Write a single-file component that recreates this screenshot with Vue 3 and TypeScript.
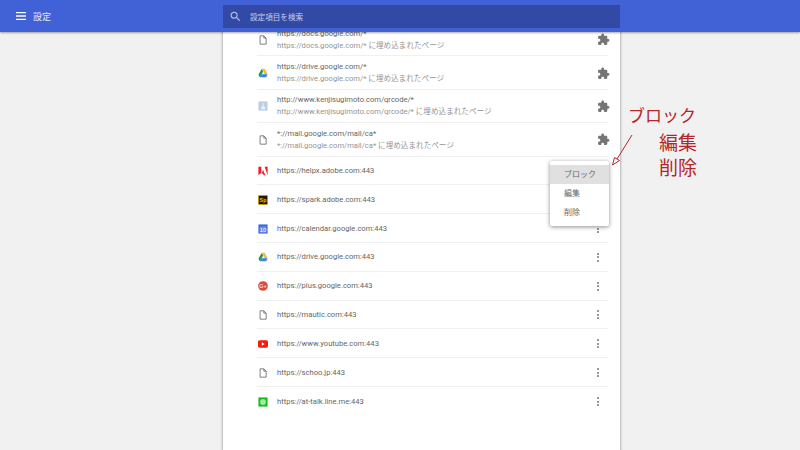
<template>
  <div class="page">
    <header class="topbar">
      <div class="topbar-left">
        <svg class="menu-icon" viewBox="0 0 14 12" width="12" height="10">
          <path d="M1 2h12M1 6h12M1 10h12" stroke="#fff" stroke-width="1.6" fill="none" />
        </svg>
        <span class="title">設定</span>
      </div>
      <div class="search">
        <svg viewBox="0 0 24 24" width="13" height="13">
          <path fill="#b9c4e6" d="M15.5 14h-.79l-.28-.27A6.47 6.47 0 0 0 16 9.5 6.5 6.5 0 1 0 9.5 16c1.61 0 3.09-.59 4.23-1.57l.27.28v.79l5 4.99L20.49 19l-4.99-5zm-6 0C7.01 14 5 11.99 5 9.5S7.01 5 9.5 5 14 7.01 14 9.5 11.99 14 9.5 14z" />
        </svg>
        <span>設定項目を検索</span>
      </div>
    </header>

    <main class="panel">
      <div class="list">
        <div v-for="row in extensionRows" :key="row.url" class="row ext-row">
          <SiteIcon :kind="row.icon" />
          <div class="texts">
            <div class="url">{{ row.url }}</div>
            <div class="sub">{{ row.url }} に埋め込まれたページ</div>
          </div>
          <svg class="puzzle" viewBox="0 0 24 24" width="13" height="13">
            <path fill="#757575" d="M20.5 11H19V7c0-1.1-.9-2-2-2h-4V3.5C13 2.12 11.88 1 10.5 1S8 2.12 8 3.5V5H4c-1.1 0-1.99.9-1.99 2v3.8H3.5c1.49 0 2.7 1.21 2.7 2.7s-1.21 2.7-2.7 2.7H2V20c0 1.1.9 2 2 2h3.8v-1.5c0-1.49 1.21-2.7 2.7-2.7 1.49 0 2.7 1.21 2.7 2.7V22H17c1.1 0 2-.9 2-2v-4h1.5c1.38 0 2.5-1.12 2.5-2.5S21.88 11 20.5 11z" />
          </svg>
        </div>
        <div v-for="row in siteRows" :key="row.url" class="row site-row">
          <SiteIcon :kind="row.icon" />
          <div class="url site-url">{{ row.url }}</div>
          <span class="dots"><i></i><i></i><i></i></span>
        </div>
      </div>
    </main>

    <div class="menu">
      <div class="menu-item active">ブロック</div>
      <div class="menu-item">編集</div>
      <div class="menu-item">削除</div>
    </div>

    <svg class="arrow" viewBox="0 0 30 40" width="30" height="40">
      <path d="M22 1 L7 25" stroke="#b3262a" stroke-width="1" fill="none" />
      <path d="M2.500 31 L4.500 23.500 L9.500 26.500 Z" stroke="#b3262a" stroke-width="1" fill="#fff" />
    </svg>
    <div class="note note-a">ブロック</div>
    <div class="note note-b">編集</div>
    <div class="note note-c">削除</div>
  </div>
</template>

<script setup lang="ts">
import { defineComponent, h } from 'vue'

type IconKind = 'file' | 'drive' | 'qr' | 'adobe' | 'spark' | 'calendar' | 'plus' | 'youtube' | 'line'

// small favicons, all drawn on a 12x12 box
const SiteIcon = defineComponent({
  props: { kind: { type: String, required: true } },
  setup(props) {
    const s = (tag: string, attrs: Record<string, string | number>, text?: string) => h(tag, attrs, text)
    const parts = (): any[] => {
      switch (props.kind) {
        case 'file':
          return [s('path', { d: 'M2.500 1h4.500l2.800 2.800v7.200h-7.300z M7 1v2.800h2.800', fill: '#fff', stroke: '#757575', 'stroke-width': 1.100 })]
        case 'drive':
          return [
            s('path', { d: 'M4.500 1h3.500l3.500 6.500h-3.500z', fill: '#f6bd1c' }),
            s('path', { d: 'M4.500 1l-4 7 1.800 3 3.700-6.500z', fill: '#1a9a56' }),
            s('path', { d: 'M2.300 11h7.500l1.700-3.500h-7.400z', fill: '#3f7ee8' })
          ]
        case 'qr':
          return [
            s('rect', { x: 0.500, y: 0.500, width: 11, height: 11, fill: '#bccde6' }),
            s('path', { d: 'M5.500 2.500h1l.6 4.500h1.200l.5 3h-5l.5-3h1.200z', fill: '#eef2f8' })
          ]
        case 'adobe':
          return [
            s('path', { d: 'M.500 1h3.500v7l-3.500 3z M8 1h3.500v10z', fill: '#ee1c25' }),
            s('path', { d: 'M6 4.500l2.800 6.500h-2l-.7-1.800h-1.600z', fill: '#ee1c25' })
          ]
        case 'spark':
          return [
            s('rect', { x: 0.500, y: 0.500, width: 11, height: 11, rx: 1, fill: '#221c00', stroke: '#c9a400', 'stroke-width': 1 }),
            s('text', { x: 6, y: 8.500, 'font-size': 6.500, 'font-family': 'Liberation Sans, sans-serif', 'font-weight': 700, fill: '#e9c11e', 'text-anchor': 'middle' }, 'Sp')
          ]
        case 'calendar':
          return [
            s('rect', { x: 0.500, y: 0.500, width: 11, height: 11, fill: '#3f67dd' }),
            s('rect', { x: 2, y: 3, width: 8, height: 7.500, fill: '#6d8ce8' }),
            s('text', { x: 6, y: 9.500, 'font-size': 7, 'font-family': 'Liberation Sans, sans-serif', fill: '#fff', 'text-anchor': 'middle' }, '10')
          ]
        case 'plus':
          return [
            s('circle', { cx: 6, cy: 6, r: 5.800, fill: '#dc4a3d' }),
            s('text', { x: 6, y: 8.300, 'font-size': 6.500, 'font-family': 'Liberation Sans, sans-serif', 'font-weight': 700, fill: '#f8dcd8', 'text-anchor': 'middle' }, 'G+')
          ]
        case 'youtube':
          return [
            s('rect', { x: 0, y: 1.500, width: 12, height: 9, rx: 2, fill: '#f01c0e' }),
            s('path', { d: 'M4.500 3.800l3.500 2.200-3.500 2.200z', fill: '#fff' })
          ]
        default:
          return [
            s('rect', { x: 0.500, y: 0.500, width: 11, height: 11, fill: '#12bf1c' }),
            s('circle', { cx: 6, cy: 6, r: 3.500, fill: '#a8e8a4' })
          ]
      }
    }
    return () => h('svg', { class: 'site-icon', viewBox: '0 0 12 12', width: 10, height: 10, style: 'flex:none;margin-left:1px' }, parts())
  }
})

const extensionRows: { url: string; icon: IconKind }[] = [
  { url: 'https://docs.google.com/*', icon: 'file' },
  { url: 'https://drive.google.com/*', icon: 'drive' },
  { url: 'http://www.kenjisugimoto.com/qrcode/*', icon: 'qr' },
  { url: '*://mail.google.com/mail/ca*', icon: 'file' }
]

const siteRows: { url: string; icon: IconKind }[] = [
  { url: 'https://helpx.adobe.com:443', icon: 'adobe' },
  { url: 'https://spark.adobe.com:443', icon: 'spark' },
  { url: 'https://calendar.google.com:443', icon: 'calendar' },
  { url: 'https://drive.google.com:443', icon: 'drive' },
  { url: 'https://plus.google.com:443', icon: 'plus' },
  { url: 'https://mautic.com:443', icon: 'file' },
  { url: 'https://www.youtube.com:443', icon: 'youtube' },
  { url: 'https://schoo.jp:443', icon: 'file' },
  { url: 'https://at-talk.line.me:443', icon: 'line' }
]
</script>

<style>
html,
body {
  margin: 0;
  overflow: hidden;
  background: #f1f1f1;
}
</style>

<style scoped>
.page {
  position: relative;
  width: 800px;
  height: 450px;
  overflow: hidden;
  background: #f1f1f1;
  font-family: Roboto, "Noto Sans CJK JP", sans-serif;
}

.topbar {
  position: absolute;
  top: 0;
  left: 0;
  right: 0;
  z-index: 2;
  height: 32px;
  display: flex;
  align-items: center;
  background: #4161d6;
  box-shadow: 0 1px 2px rgba(0, 0, 0, 0.35);
}

.topbar-left {
  width: 223px;
  display: flex;
  align-items: center;
  gap: 6px;
  padding-left: 15px;
  box-sizing: border-box;
  color: #fff;
}

.title {
  font-size: 9px;
  color: #e6eafa;
}

.search {
  width: 397px;
  height: 23px;
  display: flex;
  align-items: center;
  gap: 8px;
  padding-left: 6px;
  box-sizing: border-box;
  background: #3349a6;
  color: #c6cfec;
  font-size: 7.600px;
}

.panel {
  width: 397px;
  height: 450px;
  margin-left: 223px;
  padding: 23px 12px 0 34px;
  box-sizing: border-box;
  background: #fff;
  box-shadow: 0 0 2px 1px rgba(0, 0, 0, 0.25);
}

.row {
  display: flex;
  align-items: center;
  padding-top: 1px;
  box-sizing: border-box;
  border-bottom: 1px solid #f0f0f0;
}

.ext-row {
  height: 33.400px;
}

.site-row {
  height: 28.800px;
}

.site-row:last-child {
  border-bottom: none;
}

.texts {
  flex: 1;
  margin-left: 9px;
}

.url {
  font-size: 7.600px;
  line-height: 12px;
  color: #666;
}

.site-url {
  flex: 1;
  margin-left: 9px;
}

.sub {
  font-size: 7.600px;
  line-height: 12px;
  color: #959595;
}

.puzzle {
  flex: none;
  margin-right: -2px;
}

.dots {
  flex: none;
  display: flex;
  flex-direction: column;
  gap: 1.500px;
  margin-right: 9px;
}

.dots i {
  width: 2px;
  height: 2px;
  border-radius: 50%;
  background: #777;
}

.menu {
  position: absolute;
  left: 550px;
  top: 161px;
  width: 59px;
  height: 65px;
  padding-top: 4px;
  box-sizing: border-box;
  background: #fff;
  border-radius: 2px;
  box-shadow: 0 1px 4px rgba(0, 0, 0, 0.45);
}

.menu-item {
  height: 19px;
  line-height: 19px;
  padding-left: 14px;
  font-size: 8px;
  color: #666;
}

.menu-item.active {
  background: #e0e0e0;
}

.arrow {
  position: absolute;
  left: 610px;
  top: 134px;
}

.note {
  position: absolute;
  font-family: "Noto Sans CJK JP", sans-serif;
  font-size: 19px;
  line-height: 20px;
  color: #b3262a;
  white-space: nowrap;
}

.note-a {
  left: 628px;
  top: 105px;
  font-size: 17px;
}

.note-b {
  left: 659px;
  top: 132px;
}

.note-c {
  left: 659px;
  top: 157px;
}
</style>
